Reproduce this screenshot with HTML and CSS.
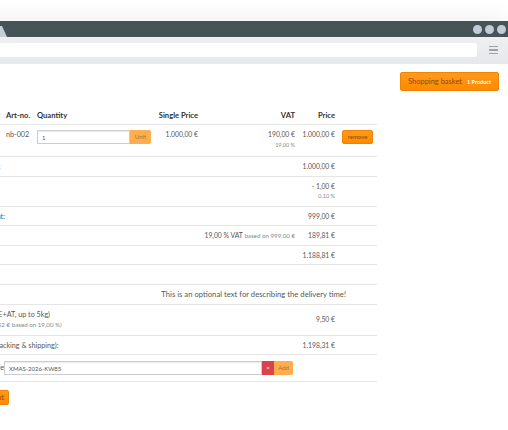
FILE: index.html
```html
<!DOCTYPE html>
<html lang="en">
<head>
    <meta charset="UTF-8">
    <title>Shopping basket</title>
    <link rel="stylesheet" href="styles.css">
</head>
<body>

    <div class="browser">
        <!-- Window title bar -->
        <div class="titlebar">
            <div class="tab"></div>
            <div class="dots"><span></span><span></span><span></span></div>
        </div>
        <!-- Address bar -->
        <div class="toolbar">
            <div class="address"></div>
            <div class="menu-icon"><span></span><span></span><span></span></div>
        </div>

        <div class="page">
            <div class="basket-bar">
                <span class="btn basket-btn">Shopping basket <span class="count">1 Product</span></span>
            </div>

            <table class="cart">
                <colgroup>
                    <col style="width: 44px">
                    <col style="width: 31px">
                    <col style="width: 121px">
                    <col style="width: 46px">
                    <col style="width: 97px">
                    <col style="width: 40px">
                    <col style="width: 39px">
                </colgroup>
                <thead>
                    <tr>
                        <th></th>
                        <th>Art-no.</th>
                        <th>Quantity</th>
                        <th class="num">Single Price</th>
                        <th class="num">VAT</th>
                        <th class="num">Price</th>
                        <th></th>
                    </tr>
                </thead>
                <tbody>
                    <tr class="item-row">
                        <td></td>
                        <td>nb-002</td>
                        <td>
                            <div class="input-group">
                                <input type="text" value="1">
                                <span class="addon">Unit</span>
                            </div>
                        </td>
                        <td class="num">1.000,00 €</td>
                        <td class="num">190,00 €<small>19,00 %</small></td>
                        <td class="num">1.000,00 €</td>
                        <td><span class="btn remove-btn">remove</span></td>
                    </tr>
                    <tr>
                        <td colspan="5">Goods total:</td>
                        <td class="num">1.000,00 €</td>
                        <td></td>
                    </tr>
                    <tr>
                        <td colspan="5"></td>
                        <td class="num">- 1,00 €<small>0,10 %</small></td>
                        <td></td>
                    </tr>
                    <tr>
                        <td colspan="5">Total amount:</td>
                        <td class="num">999,00 €</td>
                        <td></td>
                    </tr>
                    <tr>
                        <td></td>
                        <td colspan="4" class="num">19,00 % VAT <span class="note">based on 999,00 €</span></td>
                        <td class="num">189,81 €</td>
                        <td></td>
                    </tr>
                    <tr>
                        <td colspan="5"></td>
                        <td class="num">1.188,81 €</td>
                        <td></td>
                    </tr>
                    <tr>
                        <td colspan="7">&nbsp;</td>
                    </tr>
                    <tr>
                        <td></td>
                        <td colspan="6" class="delivery">This is an optional text for describing the delivery time!</td>
                    </tr>
                    <tr class="middle">
                        <td colspan="5">Shipping (DE+AT, up to 5kg)<small>(VAT incl. 1,52 € based on 19,00 %)</small></td>
                        <td class="num">9,50 €</td>
                        <td></td>
                    </tr>
                    <tr>
                        <td colspan="5">Total (incl. packing &amp; shipping):</td>
                        <td class="num">1.198,31 €</td>
                        <td></td>
                    </tr>
                    <tr class="coupon-row">
                        <td>Coupon code:</td>
                        <td colspan="4">
                            <div class="input-group coupon">
                                <input type="text" value="XMAS-2026-KW85">
                                <span class="clear-btn">×</span>
                                <span class="addon">Add</span>
                            </div>
                        </td>
                        <td></td>
                        <td></td>
                    </tr>
                </tbody>
            </table>

            <div class="checkout-bar">
                <span class="btn checkout-btn">Checkout</span>
            </div>
        </div>
    </div>

</body>
</html>
```

FILE: styles.css
```css
* {
    margin: 0;
    padding: 0;
    box-sizing: border-box;
}

body {
    font-family: Lato, "Open Sans", sans-serif;
    font-size: 7.2px;
    color: #575757;
    background: #fff;
    overflow: hidden;
    height: 430px;
}

/* Browser mockup */
.browser {
    margin-top: 21px;
    margin-left: -100px;
    width: 608px;
    min-height: 430px;
    background: #fff;
    box-shadow: 0 0 24px rgba(0, 0, 0, 0.08);
}

.titlebar {
    height: 16px;
    background: #465357;
    display: flex;
    align-items: flex-end;
    justify-content: space-between;
}

.tab {
    width: 107px;
    height: 11px;
    background: #c6cfd7;
    clip-path: polygon(0 0, 102px 0, 107px 100%, 0 100%);
}

.dots {
    display: flex;
    gap: 3px;
    align-self: center;
    margin-right: 2px;
}

.dots span {
    width: 9px;
    height: 9px;
    border-radius: 50%;
    background: #c3ccd6;
}

.toolbar {
    height: 27px;
    padding: 6px 0 7px;
    background: linear-gradient(#eeeff1, #e6e8eb);
    display: flex;
    align-items: center;
}

.address {
    width: 577px;
    height: 14px;
    background: #fff;
    border-radius: 2px;
}

.menu-icon {
    margin-left: 12px;
    display: flex;
    flex-direction: column;
    gap: 2px;
}

.menu-icon span {
    width: 9px;
    height: 1.5px;
    background: #9ea2a7;
}

/* Page content */
.page {
    padding: 8px 9px 0 0;
}

.basket-bar {
    display: flex;
    justify-content: flex-end;
}

.btn {
    display: inline-flex;
    align-items: center;
    justify-content: center;
    border-radius: 2px;
    background: linear-gradient(#ff9a1c, #ff8a00);
    border: 1px solid #f08300;
    color: #8a4a0c;
}

.basket-btn {
    height: 19px;
    width: 99px;
    font-size: 7.5px;
    gap: 5px;
}

.basket-btn .count {
    font-size: 5.5px;
    font-weight: bold;
    color: #fff;
}

.cart {
    margin-top: 14px;
    margin-left: 59px;
    width: 418px;
    table-layout: fixed;
    border-collapse: collapse;
}

.cart th,
.cart td {
    text-align: left;
    vertical-align: top;
    padding: 5px 3px 4px;
    line-height: 9.6px;
    white-space: nowrap;
    overflow: visible;
}

.cart th {
    font-size: 7.6px;
    line-height: 10px;
    font-weight: bold;
    color: #333;
}

.cart tr {
    border-bottom: 1px solid #e6e6e6;
}

.cart .num {
    text-align: right;
    font-size: 6.8px;
}

.cart th.num {
    font-size: 7.6px;
}

.cart .item-row td {
    padding-bottom: 6px;
}

.cart small {
    display: block;
    font-size: 5.5px;
    line-height: 10.4px;
    color: #888;
}

.cart .note {
    font-size: 6.2px;
    color: #888;
}

.cart .middle td {
    vertical-align: middle;
}

.cart .middle small {
    font-size: 6.2px;
    line-height: 11.4px;
    text-indent: 4px;
}

.cart .delivery {
    text-align: right;
    padding-right: 31px;
    font-size: 7.7px;
}

.input-group {
    display: flex;
    height: 14px;
}

.input-group input {
    width: 93px;
    height: 14px;
    border: 1px solid #ccc;
    box-shadow: inset 0 1px 1px rgba(0, 0, 0, 0.08);
    padding: 0 4px;
    font-family: inherit;
    font-size: 6px;
    color: #555;
    outline: none;
}

.addon {
    display: flex;
    align-items: center;
    justify-content: center;
    width: 21px;
    background: #ffad4f;
    color: #a4712f;
    font-size: 6px;
    border-radius: 0 2px 2px 0;
}

.remove-btn {
    margin-left: 1px;
    width: 31px;
    height: 14px;
    font-size: 6px;
}

.coupon-row td {
    padding: 6px 3px 6px 1px;
}

.coupon-row td:first-child {
    padding: 8px 3px 6px;
}

.coupon input {
    width: 258px;
}

.clear-btn {
    display: flex;
    align-items: center;
    justify-content: center;
    width: 12px;
    background: #d9434b;
    color: #fff;
    font-size: 6px;
}

.coupon .addon {
    width: 19px;
}

.checkout-bar {
    margin: 8px 0 0 69px;
}

.checkout-btn {
    height: 15px;
    padding: 0 4px;
    font-size: 7.2px;
}
```
